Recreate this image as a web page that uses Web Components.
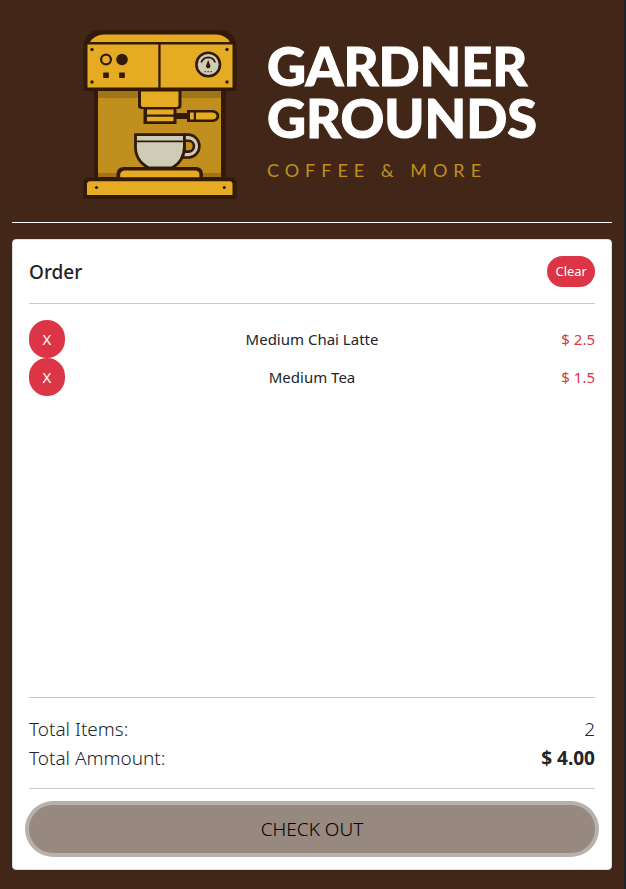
<!DOCTYPE html>
<html lang="en">
<head>
<meta charset="utf-8">
<meta name="viewport" content="width=device-width, initial-scale=1">
<title>Gardner Grounds</title>
<style>
  html { background: #212529; }
  body {
    margin: 0;
    font: 300 16px/24px "Noto Sans", "Open Sans", sans-serif;
    color: #212529;
  }
</style>
</head>
<body>
<order-page>
  <brand-header slot="header"></brand-header>
  <order-card>
    <order-item name="Medium Chai Latte" price="$ 2.5"></order-item>
    <order-item name="Medium Tea" price="$ 1.5"></order-item>
    <total-row slot="totals" label="Total Items:">2</total-row>
    <total-row slot="totals" label="Total Ammount:" strong>$ 4.00</total-row>
  </order-card>
</order-page>

<script>
class BaseElement extends HTMLElement {
  constructor() {
    super();
    this.attachShadow({ mode: "open" });
  }
  connectedCallback() {
    this.shadowRoot.innerHTML =
      "<style>*{box-sizing:border-box}" + this.constructor.styles + "</style>" + this.render();
  }
}

class OrderPage extends BaseElement {
  static styles = `
    :host { display: flex; flex-direction: column; box-sizing: border-box; min-height: 100vh;
      margin-right: 2px; padding: 0 12px 19px; background: #422718; }
    main { flex: 1; display: flex; flex-direction: column; }
    ::slotted(order-card) { flex: 1; }
  `;
  render() { return `<slot name="header"></slot><main><slot></slot></main>`; }
}

class CoffeeMachine extends BaseElement {
  static styles = `:host { display: block; } svg { display: block; }`;
  render() {
    return `
    <svg width="154" height="170" viewBox="83 29 154 170" role="img" aria-label="Espresso machine">
      <g fill="#331a08">
        <path d="M94 89H226V180H94Z"/>
        <path fill="#c18f1e" d="M98 91H221V177H98Z"/>
        <path fill="#a0741a" d="M98 91H221V98H98ZM98 173H221V177H98Z"/>
        <path d="M83.500 91V47Q84.500 30 102 30H218Q235.500 30 236.500 47V91Z"/>
        <path fill="#e5ac23" d="M90 42Q95 34.500 104 34.500H216Q225 34.500 230 42ZM87.500 44.500H158.300V87.500H87.500ZM160.600 44.500H232.500V87.500H160.600Z"/>
        <circle cx="92" cy="49.500" r="1.700"/><circle cx="227" cy="49.500" r="1.700"/>
        <circle cx="92" cy="82" r="1.700"/><circle cx="227" cy="82" r="1.700"/>
        <circle cx="106" cy="59.500" r="4.900" fill="none" stroke="#331a08" stroke-width="2.200"/>
        <circle cx="122" cy="59.500" r="5.800"/>
        <path d="M103.200 72.500h5.600v5.600h-5.600ZM119.200 72.500h5.600v5.600h-5.600Z"/>
        <circle cx="208.200" cy="64.500" r="11.800" fill="#ceccb6" stroke="#331a08" stroke-width="2.600"/>
        <path d="M201.200 62.500Q203 57.500 208.200 57.300Q213.500 57.500 215.200 62.500" fill="none" stroke="#331a08" stroke-width="1.700"/>
        <path d="M208.200 60L210.300 65.500A2.200 2.200 0 1 1 206.100 65.500ZM204.500 71h1.200v1.200h-1.200ZM207.500 71h1.200v1.200h-1.200ZM210.500 71h1.200v1.200h-1.200Z"/>
        <path d="M138 89H181.500V106Q181.500 109 178 109H141.500Q138 109 138 106Z"/>
        <path fill="#e5ac23" d="M141 91.500H178.500V105Q178.500 107 176.500 107H143Q141 107 141 105Z"/>
        <path d="M143.500 108H176.500V124H143.500Z"/>
        <path fill="#e5ac23" d="M147 109.500H173.500V114.500H147ZM147 116.700H173.500V121.300H147Z"/>
        <path d="M175 113H189V119H175Z"/>
        <path d="M187 110H213Q219.300 111 219.300 116T213 122H187Z"/>
        <path fill="#e5ac23" d="M190 112.500H193.800V119.500H190ZM196 112.500H212.500Q216.500 113 216.500 116T212.500 119.500H196Z"/>
        <path fill="#ceccb6" stroke="#331a08" stroke-width="2.600" d="M184 134.600H189A11.500 11.500 0 0 1 189 157.500H183Z"/>
        <path fill="#c18f1e" stroke="#331a08" stroke-width="2.600" d="M184.500 140.800H188.500A5.400 5.400 0 0 1 188.500 151.600H184.500Z"/>
        <path fill="#ceccb6" stroke="#331a08" stroke-width="2.800" d="M135.500 134.700H184.400V147Q184 161 172 168H149Q135.500 161 135.500 147Z"/>
        <path d="M136 140.500H184V142.300H136Z"/>
        <path d="M116.500 179V174Q117 167 124 167H196Q202.500 167 203 174V179Z"/>
        <path fill="#e5ac23" d="M120.200 177.500V174Q121 170.500 125 170.500H195Q199 170.500 199.400 174V177.500Z"/>
        <path d="M83.300 199V182Q84 177.500 89 177.500H231Q236 177.500 236.500 182V199Z"/>
        <path fill="#e5ac23" d="M87 195V183.500Q87.500 181.300 90 181.300H230Q232 181.300 232.500 183.500V195Z"/>
        <circle cx="96.500" cy="187.500" r="1.600"/><circle cx="224.300" cy="187.500" r="1.600"/>
      </g>
    </svg>`;
  }
}

class BrandHeader extends BaseElement {
  static styles = `
    :host { display: block; margin-bottom: 16px; padding-top: 29px; border-bottom: 1px solid #fff; }
    .logo { display: flex; justify-content: center; gap: 30px; padding: 0 4px 23px 0; }
    h1 { width: min-content; margin: 11px 0 0; font: 900 54px/52px Lato, sans-serif; color: #fff;
      -webkit-text-stroke: 1px #fff; }
    p { margin: 12px 0 0; font: 400 18px/28px Lato, sans-serif; letter-spacing: 6px; color: #c18f1e; }
  `;
  render() {
    return `<header class="logo"><coffee-machine></coffee-machine>
      <div><h1>GARDNER GROUNDS</h1><p>COFFEE &amp; MORE</p></div></header>`;
  }
}

class OrderCard extends BaseElement {
  static styles = `
    :host { display: flex; flex-direction: column; box-sizing: border-box; padding: 16px;
      background: #fff; border: 1px solid #dfdfdf; border-radius: 4px; }
    header { display: flex; justify-content: space-between; align-items: center;
      padding-bottom: 16px; border-bottom: 1px solid #c8c9ca; }
    h2 { margin: 0; font-size: 19px; line-height: 26px; font-weight: 500; }
    button { font: inherit; border: 0; cursor: pointer; }
    .clear { padding: 5px 8px; border-radius: 16px; background: #dc3545; color: #fff;
      font-size: 13px; line-height: 21px; font-weight: 400; }
    .items { flex: 1; padding: 16px 0; }
    .totals { padding: 17px 0 15px; border: solid #c8c9ca; border-width: 1px 0; }
    .checkout { margin-top: 16px; padding: 10px; border-radius: 28px; background: #97897f; color: #000;
      font-size: 19px; line-height: 28px; box-shadow: 0 0 0 4px #b8b0aa; }
  `;
  render() {
    return `<header><h2>Order</h2><button class="clear" type="button">Clear</button></header>
      <div class="items"><slot></slot></div>
      <div class="totals"><slot name="totals"></slot></div>
      <button class="checkout" type="button">CHECK OUT</button>`;
  }
}

class OrderItem extends BaseElement {
  static styles = `
    :host { display: grid; grid-template-columns: 1fr auto 1fr; align-items: center; font-size: 15px; font-weight: 400; }
    button { justify-self: start; min-width: 36px; padding: 7px 13px; border: 0; border-radius: 20px; background: #dc3545; color: #fff;
      font: inherit; line-height: 24px; cursor: pointer; }
    .price { justify-self: end; color: #dc3545; }
  `;
  render() {
    const name = this.getAttribute("name");
    return `<button type="button" aria-label="Remove ${name}">X</button>
      <span>${name}</span><span class="price">${this.getAttribute("price")}</span>`;
  }
}

class TotalRow extends BaseElement {
  static styles = `
    :host { display: flex; justify-content: space-between; font-size: 19px; line-height: 29px; }
    :host([strong]) .value { font-weight: 700; }
  `;
  render() {
    return `<span>${this.getAttribute("label")}</span><span class="value"><slot></slot></span>`;
  }
}

customElements.define("coffee-machine", CoffeeMachine);
customElements.define("brand-header", BrandHeader);
customElements.define("order-item", OrderItem);
customElements.define("total-row", TotalRow);
customElements.define("order-card", OrderCard);
customElements.define("order-page", OrderPage);
</script>
</body>
</html>
